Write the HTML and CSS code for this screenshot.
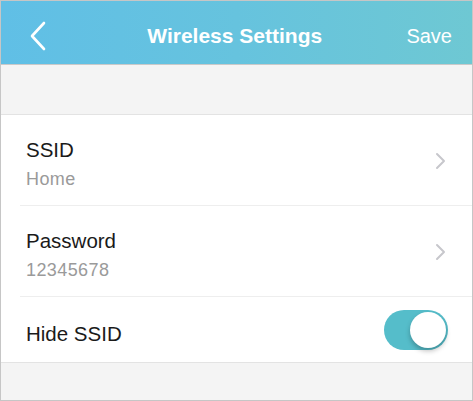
FILE: index.html
```html
<!DOCTYPE html>
<html>
<head>
<meta charset="utf-8">
<link rel="stylesheet" href="styles.css">
</head>
<body>
<div class="frame">
  <header class="bar">
    <svg class="back" width="18" height="30" viewBox="0 0 18 30"><path d="M15 2 L3 15 L15 28" fill="none" stroke="#fff" stroke-width="2.6" stroke-linecap="round" stroke-linejoin="round"/></svg>
    <div class="title">Wireless Settings</div>
    <div class="save">Save</div>
  </header>
  <div class="spacer"></div>
  <div class="list">
    <div class="row two">
      <div class="texts">
        <div class="label">SSID</div>
        <div class="value">Home</div>
      </div>
      <svg class="chev" width="12" height="18" viewBox="0 0 12 18"><path d="M2 2 L9 9 L2 16" fill="none" stroke="#c7c7cc" stroke-width="2" stroke-linecap="round" stroke-linejoin="round"/></svg>
    </div>
    <div class="row two">
      <div class="texts">
        <div class="label">Password</div>
        <div class="value">12345678</div>
      </div>
      <svg class="chev" width="12" height="18" viewBox="0 0 12 18"><path d="M2 2 L9 9 L2 16" fill="none" stroke="#c7c7cc" stroke-width="2" stroke-linecap="round" stroke-linejoin="round"/></svg>
    </div>
    <div class="row one">
      <div class="label single">Hide SSID</div>
      <div class="toggle"><div class="knob"></div></div>
    </div>
  </div>
  <div class="footer"></div>
</div>
</body>
</html>
```
FILE: styles.css
```css
* { box-sizing: border-box; }
html, body { margin: 0; padding: 0; }
body { font-family: "Liberation Sans", Arial, sans-serif; background: #fff; }
.frame {
  width: 473px; height: 401px;
  border: 1px solid #c6c6c6;
  background: #f4f4f4;
  display: flex; flex-direction: column;
  overflow: hidden;
}
.bar {
  height: 64px;
  flex: none;
  background: linear-gradient(90deg, #60bfe6 0%, #66c3de 50%, #6ec8d3 100%);
  display: flex; align-items: center;
  padding: 7px 20px 0 28px;
  border-bottom: 1px solid #c9c9c9;
}
.back { flex: none; }
.title {
  flex: 1; text-align: center;
  color: #fff; font-weight: bold; font-size: 21px;
  padding-left: 16px;
}
.save { color: #fff; font-size: 20px; }
.spacer { height: 50px; flex: none; border-bottom: 1px solid #e3e3e3; }
.list { background: #fff; padding-left: 19px; border-bottom: 1px solid #e3e3e3; }
.row {
  display: flex; align-items: center;
  padding-left: 6px; padding-right: 25px;
}
.row.two { height: 91px; border-bottom: 1px solid #eeeeee; }
.row.one { height: 65px; }
.texts { flex: 1; padding-top: 8px; }
.label { font-size: 20.5px; color: #1a1a1a; flex: 1; }
.label.single { padding-top: 8px; }
.value { font-size: 18px; letter-spacing: 0.4px; color: #9a9a9a; margin-top: 7px; }
.chev { flex: none; margin-top: 2px; }
.toggle {
  width: 64px; height: 40px; border-radius: 20px;
  background: #55bdca;
  position: relative; margin-right: -1px;
}
.knob {
  position: absolute; right: 2px; top: 2px;
  width: 36px; height: 36px; border-radius: 50%;
  background: #fff;
  box-shadow: 0 3px 5px rgba(0,0,0,0.25);
}
.footer { flex: 1; }
```
